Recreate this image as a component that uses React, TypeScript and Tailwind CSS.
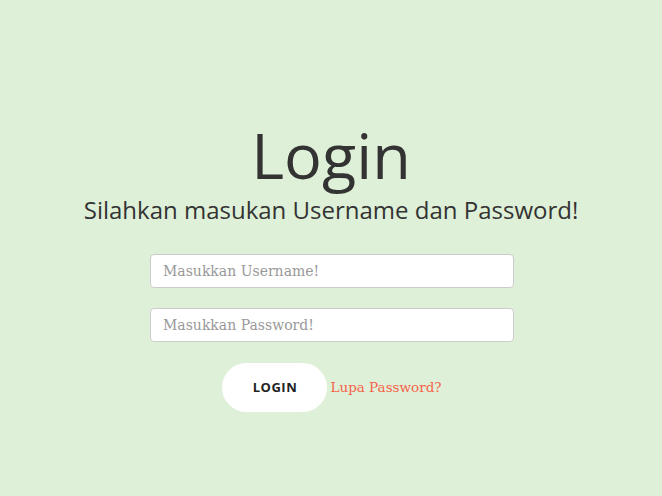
export default function App() {
  return (
    <div className="min-h-[496px] w-full bg-[#dff0d8] flex flex-col items-center pt-[112px]" style={{ fontFamily: '"Open Sans", sans-serif' }}>
      <h1 className="text-[63px] leading-[86px] text-[#333] font-normal">Login</h1>
      <p className="text-[24px] leading-[32px] text-[#333] mt-[-4px]">Silahkan masukan Username dan Password!</p>
      <div className="w-[364px] flex flex-col gap-[20px] mt-[28px] ml-[2px]">
        <input
          className="h-[34px] w-full rounded-[4px] border border-[#ccc] bg-white px-[12px] text-[14px] placeholder:text-[#999] outline-none"
          style={{ fontFamily: '"DejaVu Serif", serif' }}
          placeholder="Masukkan Username!"
        />
        <input
          type="password"
          className="h-[34px] w-full rounded-[4px] border border-[#ccc] bg-white px-[12px] text-[14px] placeholder:text-[#999] outline-none"
          style={{ fontFamily: '"DejaVu Serif", serif' }}
          placeholder="Masukkan Password!"
        />
      </div>
      <div className="flex items-center gap-[3px] mt-[21px] ml-[2px]">
        <button className="w-[105px] h-[49px] rounded-full bg-white text-[13px] font-bold text-[#222] tracking-[0.5px]">LOGIN</button>
        <a className="text-[13.5px] text-[#f5634a]" style={{ fontFamily: '"DejaVu Serif", serif' }}>Lupa Password?</a>
      </div>
    </div>
  );
}
